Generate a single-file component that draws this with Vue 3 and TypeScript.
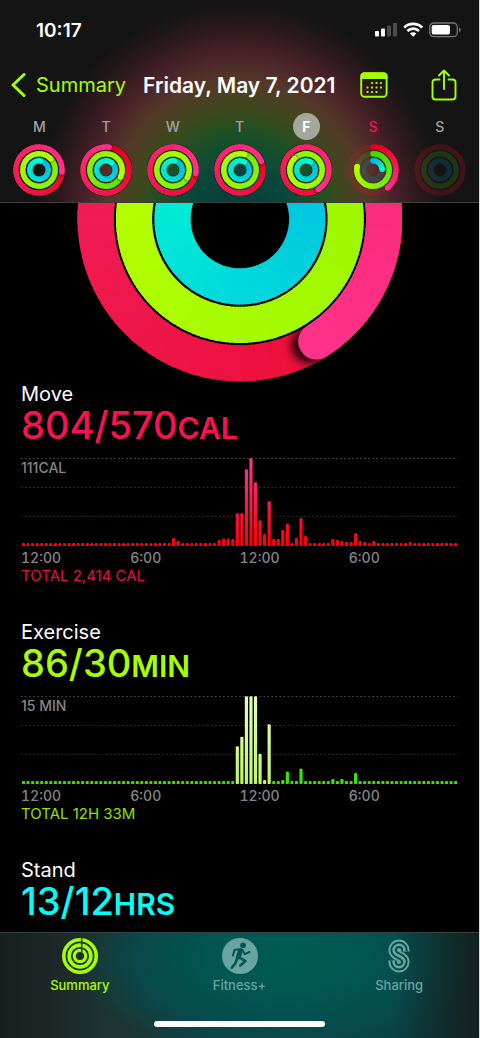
<script setup lang="ts">
type Rgb = [number, number, number]

interface Ring {
  radius: number
  width: number
  total: number
  from: Rgb
  to: Rgb
  track: string
}

interface Segment {
  d: string
  color: string
}

interface Day {
  letter: string
  angles: [number, number, number]
  tone?: string
}

interface Metric {
  id: string
  name: string
  value: string
  unit: string
  scale?: string
  total?: string
  bars: { height: number; bright: boolean }[]
}

const moveFrom: Rgb = [227, 0, 24]
const moveTo: Rgb = [255, 50, 138]
const exerciseFrom: Rgb = [61, 220, 0]
const exerciseTo: Rgb = [184, 255, 0]
const standFrom: Rgb = [0, 186, 228]
const standTo: Rgb = [0, 255, 208]

function mix(a: Rgb, b: Rgb, t: number): string {
  return `rgb(${a.map((v, i) => Math.round(v + (b[i] - v) * t)).join(',')})`
}

function polar(radius: number, degrees: number): [number, number] {
  const rad = (degrees * Math.PI) / 180
  return [radius * Math.sin(rad), -radius * Math.cos(rad)]
}

function segments(ring: Ring, step: number): Segment[] {
  const start = Math.max(0, ring.total - 360)
  const out: Segment[] = []
  for (let a = start; a < ring.total; a += step) {
    const end = Math.min(a + step * 1.4, ring.total)
    const [x1, y1] = polar(ring.radius, a)
    const [x2, y2] = polar(ring.radius, end)
    out.push({
      d: `M${x1.toFixed(2)} ${y1.toFixed(2)}A${ring.radius} ${ring.radius} 0 0 1 ${x2.toFixed(2)} ${y2.toFixed(2)}`,
      color: mix(ring.from, ring.to, a / ring.total),
    })
  }
  return out
}

function buildRings(angles: [number, number, number], radii: number[], width: number, step: number) {
  const palette: [Rgb, Rgb, string][] = [
    [moveFrom, moveTo, '#e8102c'],
    [exerciseFrom, exerciseTo, '#40c010'],
    [standFrom, standTo, '#1090c0'],
  ]
  return palette.map(([from, to, track], i) => {
    const ring: Ring = { radius: radii[i], width, total: angles[i], from, to, track }
    const [cx, cy] = polar(ring.radius, ring.total)
    const [sx, sy] = polar(ring.radius, ring.total + (width > 10 ? 3 : 6))
    return { ...ring, parts: segments(ring, step), cap: { cx, cy }, shadow: { cx: sx, cy: sy } }
  })
}

const days: Day[] = [
  { letter: 'M', angles: [455, 767, 370] },
  { letter: 'T', angles: [368, 476, 400] },
  { letter: 'W', angles: [459, 838, 370] },
  { letter: 'T', angles: [428, 737, 390] },
  { letter: 'F', angles: [508, 1035, 390], tone: 'selected' },
  { letter: 'S', angles: [141, 283, 85], tone: 'today' },
  { letter: 'S', angles: [0, 0, 0] },
]

const week = days.map((day) => ({ ...day, rings: buildRings(day.angles, [23, 16.2, 9.2], 5.4, 8) }))
const hero = buildRings([508, 1032, 390], [143.5, 105.3, 67], 36, 2)

function fill(base: number, values: Record<number, number>, bright: number[] = []) {
  return Array.from({ length: 96 }, (_, i) => ({ height: values[i] ?? base, bright: bright.includes(i) }))
}

const metrics: Metric[] = [
  {
    id: 'move',
    name: 'Move',
    value: '804/570',
    unit: 'CAL',
    scale: '111CAL',
    total: 'TOTAL 2,414 CAL',
    bars: fill(3, {
      33: 8, 34: 5, 43: 6, 44: 7.5, 45: 7.5, 46: 7, 47: 33, 48: 33, 49: 77, 50: 88, 51: 64, 52: 26, 53: 12,
      54: 45, 55: 7, 56: 7, 57: 16, 58: 22.5, 60: 8, 61: 28, 62: 10, 68: 7, 69: 6, 70: 5, 71: 4, 72: 4,
      73: 13, 74: 5, 75: 4, 77: 5, 85: 4,
    }),
  },
  {
    id: 'exercise',
    name: 'Exercise',
    value: '86/30',
    unit: 'MIN',
    scale: '15 MIN',
    total: 'TOTAL 12H 33M',
    bars: fill(
      3,
      { 47: 38, 48: 47.5, 49: 88, 50: 88, 51: 88, 52: 30.5, 53: 4, 54: 60, 57: 4, 58: 12.5, 61: 15.5, 68: 5, 70: 5, 73: 11 },
      [47, 48, 49, 50, 51, 52, 53, 54],
    ),
  },
  { id: 'stand', name: 'Stand', value: '13/12', unit: 'HRS', bars: [] },
]

const hours = ['12:00', '6:00', '12:00', '6:00']
const calendarDots = [
  [11, 10], [15.5, 10], [20, 10],
  [6.5, 14.5], [11, 14.5], [15.5, 14.5], [20, 14.5],
  [6.5, 19], [11, 19], [15.5, 19],
]
</script>

<template>
  <div class="screen">
    <header class="top">
      <div class="status">
        <span class="clock">10:17</span>
        <svg class="status-icons" width="86" height="16" viewBox="0 0 86 16" aria-hidden="true">
          <rect x="0" y="9" width="4" height="5.5" rx="1" fill="#fff" />
          <rect x="6" y="6.500" width="4" height="8" rx="1" fill="#fff" />
          <rect x="12" y="3.500" width="4" height="11" rx="1" fill="#4c4a4b" />
          <rect x="18" y="1" width="4" height="13.500" rx="1" fill="#4c4a4b" />
          <g fill="none" stroke="#fff" stroke-width="2.600">
            <path d="M29.200 5.600a12.800 12.800 0 0 1 18 0" />
            <path d="M32.400 9a8.200 8.200 0 0 1 11.600 0" />
          </g>
          <path d="M35 11.600a4.600 4.600 0 0 1 6.400 0L38.200 14.800z" fill="#fff" />
          <rect x="54.700" y="1" width="27.600" height="13.600" rx="4" fill="none" stroke="#777" stroke-width="1.300" />
          <rect x="56.700" y="3" width="18.300" height="9.600" rx="2.200" fill="#fff" />
          <path d="M84 5.600v4.600q1.800-.8 1.800-2.300T84 5.600z" fill="#777" />
        </svg>
      </div>

      <nav class="bar" aria-label="Day">
        <button class="back" type="button">
          <svg width="16" height="26" viewBox="0 0 16 26" aria-hidden="true">
            <path d="M13 2.500L2 13l11 10.500" fill="none" stroke="currentColor" stroke-width="3" stroke-linecap="round" stroke-linejoin="round" />
          </svg>
          <span>Summary</span>
        </button>
        <h1>Friday, May 7, 2021</h1>
        <button class="icon calendar" type="button" aria-label="Calendar">
          <svg width="28" height="26" viewBox="0 0 28 26" aria-hidden="true">
            <rect x="1.200" y="1.200" width="25.400" height="23.600" rx="3.500" fill="none" stroke="currentColor" stroke-width="1.900" />
            <path d="M.5 7V4q0-3.500 3.500-3.500h20q3.500 0 3.500 3.500v3z" fill="currentColor" />
            <rect v-for="([x, y], i) in calendarDots" :key="i" :x="x" :y="y" width="2" height="2" rx=".4" fill="currentColor" />
          </svg>
        </button>
        <button class="icon" type="button" aria-label="Share">
          <svg width="26" height="32" viewBox="0 0 26 32" aria-hidden="true">
            <g fill="none" stroke="currentColor" stroke-width="1.900" stroke-linecap="round" stroke-linejoin="round">
              <path d="M8.500 10.500H4.500Q1.500 10.500 1.500 13.500V27.500Q1.500 30.500 4.500 30.500H21.500Q24.500 30.500 24.500 27.500V13.500Q24.500 10.500 21.500 10.500H17.500" />
              <path d="M13 20V1.500M8 6.500l5-5 5 5" />
            </g>
          </svg>
        </button>
      </nav>

      <ol class="week">
        <li v-for="(day, i) in week" :key="i" :class="day.tone">
          <span class="letter">{{ day.letter }}</span>
          <svg width="52" height="52" viewBox="-26 -26 52 52" aria-hidden="true">
            <g v-for="(ring, r) in day.rings" :key="r" fill="none">
              <circle :r="ring.radius" :stroke="ring.track" stroke-opacity=".2" :stroke-width="ring.width" />
              <circle v-if="ring.total > 360" :r="ring.radius" stroke="#0a1a10" stroke-opacity=".5" :stroke-width="ring.width + 1.4" />
              <template v-if="ring.total > 0">
                <circle v-if="ring.total < 360" cx="0" :cy="-ring.radius" :r="ring.width / 2" :fill="ring.parts[0].color" />
                <path v-for="(part, p) in ring.parts" :key="p" :d="part.d" :stroke="part.color" :stroke-width="ring.width" />
                <circle v-if="ring.total > 360" :cx="ring.shadow.cx" :cy="ring.shadow.cy" :r="ring.width / 2" fill="#000" fill-opacity=".2" />
                <circle :cx="ring.cap.cx" :cy="ring.cap.cy" :r="ring.width / 2" :fill="mix(ring.from, ring.to, 1)" />
              </template>
            </g>
          </svg>
        </li>
      </ol>
    </header>

    <main class="content">
      <svg class="hero" viewBox="-162 -16 324 178" role="img" aria-label="Activity rings">
        <defs>
          <filter id="soft" x="-50%" y="-50%" width="200%" height="200%">
            <feGaussianBlur stdDeviation="4" />
          </filter>
          <clipPath id="outer-band">
            <path clip-rule="evenodd" d="M0-161.500A161.500 161.500 0 0 1 0 161.500A161.500 161.500 0 0 1 0-161.500zM0-125.500A125.500 125.500 0 0 0 0 125.500A125.500 125.500 0 0 0 0-125.500z" />
          </clipPath>
        </defs>
        <g v-for="(ring, r) in hero" :key="r" fill="none">
          <path v-for="(part, p) in ring.parts" :key="p" :d="part.d" :stroke="part.color" :stroke-width="ring.width" />
          <template v-if="r === 0">
            <g clip-path="url(#outer-band)">
              <circle :cx="ring.shadow.cx" :cy="ring.shadow.cy" r="18" fill="#000" fill-opacity=".85" filter="url(#soft)" />
            </g>
            <path v-for="(part, p) in ring.parts.slice(60)" :key="'top' + p" :d="part.d" :stroke="part.color" :stroke-width="ring.width" />
            <circle :cx="ring.cap.cx" :cy="ring.cap.cy" r="18" :fill="mix(ring.from, ring.to, 1)" />
          </template>
        </g>
      </svg>

      <section v-for="metric in metrics" :key="metric.id" class="metric" :class="metric.id">
        <h2>{{ metric.name }}</h2>
        <p class="value">{{ metric.value }}<span class="unit">{{ metric.unit }}</span></p>
        <template v-if="metric.bars.length">
          <div class="chart">
            <svg viewBox="0 0 438 90" aria-hidden="true">
              <defs>
                <linearGradient id="fill-move" gradientUnits="userSpaceOnUse" x1="0" y1="89" x2="0" y2="1">
                  <stop offset="0" stop-color="#fb0009" />
                  <stop offset=".3" stop-color="#f3102e" />
                  <stop offset="1" stop-color="#ff3596" />
                </linearGradient>
                <linearGradient id="fill-bright" gradientUnits="userSpaceOnUse" x1="0" y1="89" x2="0" y2="1">
                  <stop offset="0" stop-color="#bdf56c" />
                  <stop offset="1" stop-color="#e6fdbd" />
                </linearGradient>
              </defs>
              <g stroke="#505050" stroke-width="1" stroke-dasharray="1.500 2.550">
                <path d="M0 1.500H438" />
                <path d="M0 30.500H438" stroke="#383838" />
                <path d="M0 59.500H438" stroke="#383838" />
              </g>
              <rect
                v-for="(bar, i) in metric.bars"
                :key="i"
                :x="0.9 + i * 4.56"
                :y="89.3 - bar.height"
                width="3.200"
                :height="bar.height"
                rx="1.200"
                :class="{ bright: bar.bright }"
              />
            </svg>
            <span class="scale">{{ metric.scale }}</span>
          </div>
          <div class="hours">
            <span v-for="(hour, i) in hours" :key="i">{{ hour }}</span>
          </div>
          <p class="total">{{ metric.total }}</p>
        </template>
      </section>
    </main>

    <footer class="bottom">
      <nav class="tabs" aria-label="Main">
        <a href="#summary" class="active">
          <svg width="36" height="36" viewBox="-18 -18 36 36" aria-hidden="true">
            <g fill="none" stroke="currentColor" stroke-width="3.600">
              <circle r="16.200" />
              <circle r="10.900" />
              <circle r="5.700" stroke-width="3.200" />
            </g>
            <path d="M1.700-18.500V-3.500" stroke="#1f3433" stroke-width="1.500" />
          </svg>
          <span>Summary</span>
        </a>
        <a href="#fitness">
          <svg width="36" height="36" viewBox="0 0 36 36" aria-hidden="true">
            <circle cx="18" cy="18" r="18" fill="currentColor" />
            <circle cx="21" cy="7.300" r="2.900" fill="#045650" />
            <g fill="none" stroke="#045650" stroke-linecap="round" stroke-linejoin="round">
              <path d="M18.500 12.500L16.300 19" stroke-width="5" />
              <path d="M17 11.300l-4.500.7-1.600 5.500M20.500 12l2.300 4.200 4.600-2.200" stroke-width="2" />
              <path d="M17.500 19.500l5.800 3.700-5 4.300M15.200 20l-1.600 5L9.700 29.800" stroke-width="2.600" />
            </g>
          </svg>
          <span>Fitness+</span>
        </a>
        <a href="#sharing">
          <svg width="36" height="36" viewBox="-7 -1.500 36 36" aria-hidden="true">
            <mask id="strands" maskUnits="userSpaceOnUse" x="-7" y="-2" width="36" height="37">
              <g fill="none">
                <path v-for="[w, c] in [[10.4, '#fff'], [6.4, '#000'], [2.6, '#fff']]" :key="w" :stroke-width="w" :stroke="c" d="M16.400 12V10.700A5.400 5.400 0 0 0 5.600 10.700C5.600 17.500 16.400 15.500 16.400 22.300A5.400 5.400 0 0 1 5.600 22.300V21" />
              </g>
            </mask>
            <rect x="-7" y="-2" width="36" height="37" fill="currentColor" mask="url(#strands)" />
          </svg>
          <span>Sharing</span>
        </a>
      </nav>
      <div class="home"></div>
    </footer>
  </div>
</template>

<style>
body {
  margin: 0;
  background: #000;
}
</style>

<style scoped>
.screen {
  display: flex;
  flex-direction: column;
  height: 100vh;
  box-sizing: border-box;
  border-right: 1px solid #d8d8d8;
  background: #000;
  color: #fff;
  font-family: Inter, "Liberation Sans", sans-serif;
}

h1,
h2,
p,
ol {
  margin: 0;
  padding: 0;
  font-weight: 400;
}

button {
  border: 0;
  padding: 0;
  background: none;
  color: #a6ff00;
  font: inherit;
}

svg {
  display: block;
}

.top {
  flex: none;
  box-sizing: border-box;
  border-bottom: 1px solid #3c3c3c;
  background:
    radial-gradient(ellipse 205px 216px at 50% 108%, #06393c 0%, #08483c 24%, #1a5028 38%, #3c4a1c 50%, #54382a 64%, #4a2229 76%, #2c191d 88%, #141414 100%),
    #141414;
}

.status {
  display: flex;
  align-items: center;
  justify-content: space-between;
  height: 60px;
  padding: 0 18px 0 36px;
}

.clock {
  font-size: 19px;
  font-weight: 600;
}

.bar {
  display: flex;
  align-items: center;
  height: 50px;
  padding: 0 22px 0 11px;
}

.back {
  display: flex;
  align-items: center;
  gap: 9px;
  font-size: 20px;
}

h1 {
  margin-left: 17px;
  font-size: 21px;
  font-weight: 600;
  white-space: nowrap;
}

.calendar {
  margin-left: auto;
  margin-right: 43px;
}

.week {
  display: flex;
  padding: 3px 6px 6px;
  list-style: none;
}

.week li {
  display: flex;
  flex: 1;
  flex-direction: column;
  align-items: center;
  gap: 4px;
}

.letter {
  width: 27px;
  height: 27px;
  border-radius: 50%;
  color: #a3a0a3;
  font-size: 14px;
  font-weight: 500;
  line-height: 27px;
  text-align: center;
}

.selected .letter {
  background: #a6a79c;
  color: #fff;
  font-weight: 700;
}

.today .letter {
  color: #fa114f;
}

.content {
  flex: 1;
  min-height: 0;
  overflow: hidden;
}

.hero {
  width: 68%;
  margin: 0 auto;
}

.metric {
  margin-bottom: 35px;
  padding: 0 21px;
}

h2 {
  font-size: 20px;
  line-height: 24px;
}

.value {
  font-size: 38px;
  font-weight: 500;
  line-height: 38px;
}

.unit {
  font-size: 30px;
  font-weight: 600;
}

.chart {
  position: relative;
  margin-top: 10px;
}

.chart svg {
  width: 100%;
}

.scale {
  position: absolute;
  top: 3px;
  left: 0;
  color: #85858a;
  font-size: 14px;
  font-weight: 500;
  line-height: 16px;
}

.hours {
  display: grid;
  grid-template-columns: repeat(4, 1fr);
  margin-top: 3px;
  color: #85858a;
  font-size: 14px;
  font-weight: 500;
  font-variant-numeric: tabular-nums;
  line-height: 16px;
}

.total {
  font-size: 15px;
  line-height: 19px;
}

.move .value {
  color: #fa114f;
}

.move .total {
  color: #e01048;
}

.move rect {
  fill: url(#fill-move);
}

.exercise .value {
  color: #a6ff00;
}

.exercise .total {
  color: #92e000;
}

.exercise rect {
  fill: #3fe000;
}

.exercise .bright {
  fill: url(#fill-bright);
}

.stand .value {
  color: #00fff6;
}

.bottom {
  flex: none;
  height: 106px;
  box-sizing: border-box;
  border-top: 1px solid #35413f;
  background:
    linear-gradient(90deg, #191d1e 0%, #191d1e00 22%, #14201f00 82%, #14201f 100%),
    radial-gradient(ellipse 210px 110px at 60% 24%, #005c54 0%, #005653 35%, #08494b 70%, #0c414700 100%),
    linear-gradient(90deg, #20302f 0%, #1e3433 30%, #0d4048 60%, #10393c 100%);
}

.tabs {
  display: flex;
  padding-top: 5px;
}

.tabs a {
  display: flex;
  flex: 1;
  flex-direction: column;
  align-items: center;
  gap: 1px;
  color: #68a5a1;
  font-size: 13px;
  font-weight: 500;
  line-height: 20px;
  text-decoration: none;
}

.tabs .active {
  color: #a6ff00;
}

.home {
  width: 171px;
  height: 6px;
  margin: 26px auto 0;
  border-radius: 3px;
  background: #fff;
}
</style>
